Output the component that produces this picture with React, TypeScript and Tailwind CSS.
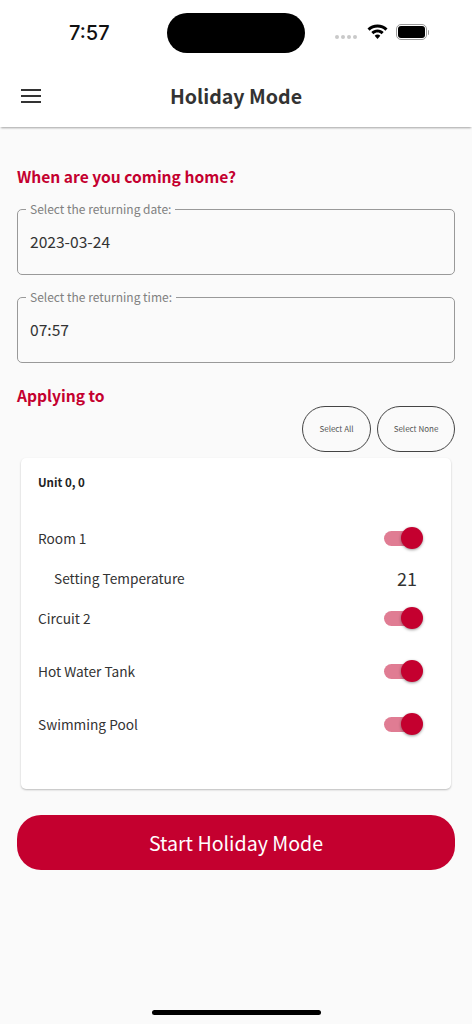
const SANS = "font-['Noto_Sans_CJK_JP','Noto_Sans',sans-serif]";

function StatusBar() {
  return (
    <div className="relative h-[66px]">
      <span className="absolute left-[69px] top-[21px] font-['Inter',sans-serif] text-[20px] leading-6 font-medium text-[#111]">7:57</span>
      {/* dynamic island */}
      <div className="absolute left-[167px] top-[13px] h-[40px] w-[138px] rounded-[20px] bg-black" />
      <div className="absolute left-[335px] top-[35px] flex gap-[2px]">
        <span className="h-[4px] w-[4px] rounded-full bg-[#c9c9c9]" />
        <span className="h-[4px] w-[4px] rounded-full bg-[#c9c9c9]" />
        <span className="h-[4px] w-[4px] rounded-full bg-[#c9c9c9]" />
        <span className="h-[4px] w-[4px] rounded-full bg-[#c9c9c9]" />
      </div>
      <svg className="absolute left-[367px] top-[24px]" width="21" height="16" viewBox="0 0 21 16">
        <path d="M10.5 0.5C6.6 0.5 3.1 2 0.5 4.5L2.6 6.7C4.7 4.7 7.5 3.5 10.5 3.5S16.3 4.7 18.4 6.7L20.5 4.5C17.9 2 14.4 0.5 10.5 0.5Z" fill="#000" />
        <path d="M10.5 5.6C8.1 5.6 5.9 6.6 4.3 8.1L6.4 10.2C7.5 9.2 8.9 8.6 10.5 8.6S13.5 9.2 14.6 10.2L16.7 8.1C15.1 6.6 12.9 5.6 10.5 5.6Z" fill="#000" />
        <path d="M10.5 10.6C9.4 10.6 8.4 11 7.7 11.7L10.5 15L13.3 11.7C12.6 11 11.6 10.6 10.5 10.6Z" fill="#000" />
      </svg>
      <div className="absolute left-[396px] top-[24px] flex items-center">
        <div className="flex h-[16px] w-[31px] items-center justify-center rounded-[5px] border border-[#9a9a9a]">
          <div className="h-[12px] w-[27px] rounded-[3px] bg-black" />
        </div>
        <div className="ml-[1px] h-[5px] w-[1px] rounded-r-full bg-[#9a9a9a]" />
      </div>
    </div>
  );
}

function Header() {
  return (
    <div className="relative z-10 h-[61px] bg-white shadow-[0_2px_2px_-1px_rgba(0,0,0,0.35)]">
      <div className="flex h-[60px] items-center justify-center">
        <svg className="absolute left-[21px] top-[23px]" width="20" height="14" viewBox="0 0 20 14">
          <path d="M0 1h20M0 7h20M0 13h20" stroke="#333" strokeWidth="2" />
        </svg>
        <span className="text-[19.6px] leading-7 font-bold text-[#333]">Holiday Mode</span>
      </div>
    </div>
  );
}

function DateField({ label, value }: { label: string; value: string }) {
  return (
    <fieldset className="h-[73px] rounded-[5px] border border-[#999] px-[8px]">
      <legend className="px-[4px] text-[12px] leading-[14px] text-[#808080]">{label}</legend>
      <div className="pt-[13px] pl-[4px] text-[15.6px] leading-6 text-[#333]">{value}</div>
    </fieldset>
  );
}

function Toggle() {
  return (
    <div className="flex h-[24px] w-[40px] items-center">
      <div className="relative h-[15px] w-[36px] rounded-full bg-[#e07c93]">
        <div className="absolute left-[17px] top-[-4px] h-[22px] w-[22px] rounded-full bg-[#c4002f] shadow-[0_1px_3px_rgba(0,0,0,0.4)]" />
      </div>
    </div>
  );
}

function ToggleRow({ label, className }: { label: string; className: string }) {
  return (
    <div className={`flex items-center justify-between pr-[27px] ${className}`}>
      <span className="text-[13.7px] leading-6 text-[#333]">{label}</span>
      <Toggle />
    </div>
  );
}

export default function App() {
  return (
    <div className={`flex h-[1024px] w-[472px] flex-col overflow-hidden bg-[#fafafa] ${SANS}`}>
      <div className="bg-white">
        <StatusBar />
      </div>
      <Header />

      <div className="flex flex-col px-[17px]">
        {/* Return date and time */}
        <h2 className="mt-[37px] text-[15.6px] leading-6 font-bold text-[#c4002f]">When are you coming home?</h2>
        <div className="mt-[14px] flex flex-col gap-[15px]">
          <DateField label="Select the returning date:" value="2023-03-24" />
          <DateField label="Select the returning time:" value="07:57" />
        </div>

        {/* Applying to */}
        <h2 className="mt-[20px] text-[15.6px] leading-6 font-bold text-[#c4002f]">Applying to</h2>
        <div className="mt-[-1px] flex justify-end gap-[6px]">
          <button className="h-[46px] w-[69px] rounded-[23px] border-[1.5px] border-[#444] text-[8px] text-[#555]">Select All</button>
          <button className="h-[46px] w-[78px] rounded-[23px] border-[1.5px] border-[#444] text-[8px] text-[#555]">Select None</button>
        </div>

        <div className="mx-[4px] mt-[6px] h-[331px] rounded-[5px] bg-white pl-[17px] shadow-[0_1px_2px_rgba(0,0,0,0.25)]">
          <div className="pt-[14px] text-[11.5px] leading-5 font-bold text-[#222]">Unit 0, 0</div>
          <ToggleRow label="Room 1" className="mt-[34px]" />
          <div className="mt-[16px] flex items-center justify-between pr-[34px] pl-[16px]">
            <span className="text-[13.7px] leading-6 text-[#333]">Setting Temperature</span>
            <span className="text-[18px] leading-6 text-[#333]">21</span>
          </div>
          <ToggleRow label="Circuit 2" className="mt-[16px]" />
          <ToggleRow label="Hot Water Tank" className="mt-[29px]" />
          <ToggleRow label="Swimming Pool" className="mt-[29px]" />
        </div>

        <button className="mt-[26px] h-[55px] rounded-[24px] bg-[#c4002f] text-[19.6px] text-white">Start Holiday Mode</button>
      </div>

      {/* home indicator */}
      <div className="mt-[140px] flex justify-center">
        <div className="h-[5px] w-[169px] rounded-full bg-black" />
      </div>
    </div>
  );
}
